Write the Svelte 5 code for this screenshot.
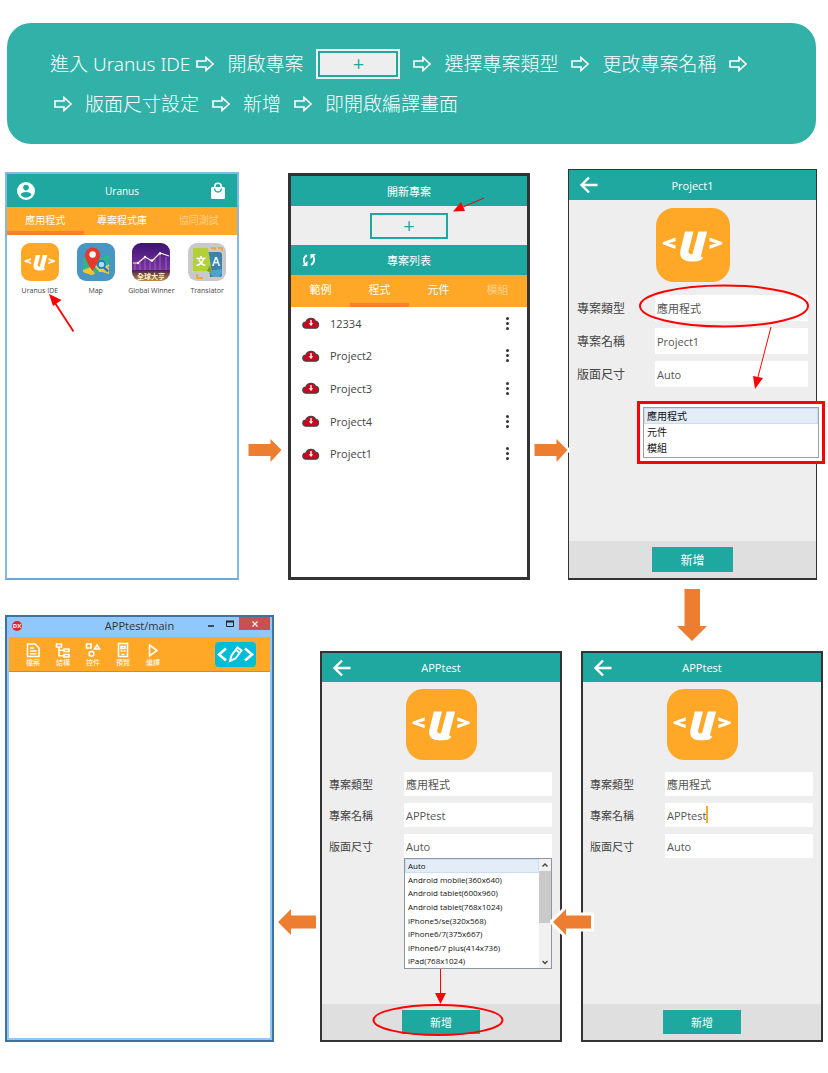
<script>
  const appTabs = ['應用程式', '專案程式庫', '協同測試'];
  const apps = ['Uranus IDE', 'Map', 'Global Winner', 'Translator'];
  const projectTabs = ['範例', '程式', '元件', '模組'];
  const projects = ['12334', 'Project2', 'Project3', 'Project4', 'Project1'];
  const types = ['應用程式', '元件', '模組'];
  const sizes = [
    'Auto',
    'Android mobile(360x640)',
    'Android tablet(600x960)',
    'Android tablet(768x1024)',
    'iPhone5/se(320x568)',
    'iPhone6/7(375x667)',
    'iPhone6/7 plus(414x736)',
    'iPad(768x1024)'
  ];
  const tools = ['檔案', '結構', '控件', '預覽', '編譯'];
</script>

{#snippet step()}
  <svg class="step" viewBox="0 0 18 16" width="18" height="16" aria-hidden="true">
    <path d="M1 5H10V1.5L17 8L10 14.5V11H1Z" fill="none" stroke="#fff" stroke-width="1.6" />
  </svg>
{/snippet}

{#snippet nextArrow()}
  <svg viewBox="0 0 38 32" width="38" height="32" aria-hidden="true">
    <path d="M2.5 10H24.5V5L35.5 16L24.5 28V22H2.5Z" fill="#ed7d31" stroke="#fff" stroke-width="5" paint-order="stroke" />
  </svg>
{/snippet}

{#snippet backArrow()}
  <svg viewBox="0 0 44 34" width="44" height="34" aria-hidden="true">
    <path d="M41 10.500H16V4L3 17L16 30V23.500H41Z" fill="#ed7d31" stroke="#fff" stroke-width="6" paint-order="stroke" />
  </svg>
{/snippet}

{#snippet logo()}
  <svg class="logo" viewBox="0 0 74 74" aria-hidden="true">
    <rect width="74" height="74" rx="18" fill="#ffa726" />
    <path d="M29 23.500H37.500L32.500 43Q32 47 36.500 46L42.500 23.500H51.200L45 47.500Q44.800 49.500 47.200 49.500Q45.500 53.500 38 53.500H34Q23 53 24.300 43Z" fill="#fff" />
    <path d="M19.500 29.500V33.200L12.500 35.200L19.500 37.200V41L6.800 36.300V34.200Z" fill="#fff" />
    <path d="M53.500 29.500V33.200L60.500 35.200L53.500 37.200V41L66.300 36.300V34.200Z" fill="#fff" />
  </svg>
{/snippet}

{#snippet form(id, name)}
  <header class="bar">
    <button class="back" aria-label="返回">
      <svg viewBox="0 0 20 20" width="20" height="20"><path d="M18.500 10H3M10 2.500L2.500 10L10 17.500" fill="none" stroke="#fff" stroke-width="2.400" /></svg>
    </button>
    <h2>{name}</h2>
  </header>
  {@render logo()}
  <div class="fields">
    <label for="{id}-type">專案類型</label>
    <select id="{id}-type">
      {#each types as t}<option>{t}</option>{/each}
    </select>
    <label for="{id}-name">專案名稱</label>
    <div class="name">
      <input id="{id}-name" value={name} />
      {#if id === 'named'}<span class="caret"></span>{/if}
    </div>
    <label for="{id}-size">版面尺寸</label>
    <select id="{id}-size">
      {#each sizes as s}<option>{s}</option>{/each}
    </select>
  </div>
  <footer><button>新增</button></footer>
{/snippet}

<main>
  <section class="banner">
    <div class="line">
      <span class="first">進入 Uranus IDE {@render step()}</span>
      <span>開啟專案</span>
      <button class="plus" aria-label="開新專案"><span>+</span></button>
      {@render step()}
      <span>選擇專案類型</span>
      {@render step()}
      <span>更改專案名稱</span>
      {@render step()}
    </div>
    <div class="line second">
      {@render step()}
      <span>版面尺寸設定</span>
      {@render step()}
      <span>新增</span>
      {@render step()}
      <span>即開啟編譯畫面</span>
    </div>
  </section>

  <div class="row top">
    <section class="screen home">
      <header class="bar">
        <button class="left" aria-label="帳號">
          <svg viewBox="0 0 18 18" width="18" height="18">
            <circle cx="9" cy="9" r="9" fill="#fff" />
            <circle cx="9" cy="5.600" r="2.800" fill="#1ba8a0" />
            <path d="M3.500 12.500Q4.500 10 9 10T14.500 12.500Q12.500 15.600 9 15.600T3.500 12.500Z" fill="#1ba8a0" />
          </svg>
        </button>
        <h2>Uranus</h2>
        <button class="right" aria-label="商店">
          <svg viewBox="0 0 16 18" width="16" height="18">
            <path d="M4.800 6V4.500A3.200 3.200 0 0 1 11.200 4.500V6" fill="none" stroke="#fff" stroke-width="1.600" />
            <rect x="1" y="5" width="14" height="12" rx="1.500" fill="#fff" />
            <path d="M4.500 6.500Q5 10 8 10T11.500 6.500" fill="none" stroke="#1ba8a0" stroke-width="1.400" />
          </svg>
        </button>
      </header>
      <nav>
        {#each appTabs as t, i}<button class:on={i === 0} class:dim={i === 2}>{t}</button>{/each}
      </nav>
      <div class="apps">
        {#each apps as a, i}
          <button>
            {#if i === 0}
              {@render logo()}
            {:else if i === 1}
              <svg viewBox="0 0 38 38">
                <rect width="38" height="38" rx="9" fill="#4796c4" />
                <path d="M6 15L14 12L23 15L32 12V31L23 28L14 32L6 29Z" fill="#2fb58d" />
                <path d="M6 27L14 24L18 31L14 32L6 29ZM22 28L25 21L32 25V31Z" fill="#ffc531" />
                <path d="M14 12L16 20L23 28L32 22" fill="none" stroke="#f2d54c" stroke-width="1.800" />
                <path d="M15.500 28Q8 17 8 12A7.600 7.600 0 0 1 23.200 12Q23 17 15.500 28Z" fill="#e8382c" />
                <circle cx="15.600" cy="11.500" r="3.200" fill="#fff" />
                <circle cx="24.500" cy="21.500" r="3.600" fill="#a8e0fa" stroke="#1b76d1" stroke-width="1.600" />
                <path d="M27 24.500L31 28.500" stroke="#1b76d1" stroke-width="2.400" />
              </svg>
            {:else if i === 2}
              <svg viewBox="0 0 38 38">
                <defs>
                  <linearGradient id="night" x1="0" y1="0" x2="0" y2="1">
                    <stop offset="0" stop-color="#3b1370" />
                    <stop offset="0.700" stop-color="#7b35a0" />
                    <stop offset="0.710" stop-color="#44204d" />
                    <stop offset="1" stop-color="#bd8b45" />
                  </linearGradient>
                </defs>
                <rect width="38" height="38" rx="9" fill="url(#night)" />
                <path d="M3 20V27M8 17V27M13 15V27M18 18V27M23 16V27M28 11V27M34 14V27" stroke="#a76cc8" stroke-width="0.800" />
                <path d="M1 20L6 20L13 14L20 18L28 10L37 13" fill="none" stroke="#fff0d8" stroke-width="1.200" />
                <g fill="#fff"><circle cx="6" cy="20" r="1.200" /><circle cx="13" cy="14" r="1.200" /><circle cx="20" cy="17.500" r="1.200" /><circle cx="28" cy="10.500" r="1.200" /></g>
                <text x="19" y="35.500" text-anchor="middle" font-size="7" font-weight="700" fill="#fff0c8">全球大亨</text>
              </svg>
            {:else}
              <svg viewBox="0 0 38 38">
                <rect width="38" height="38" rx="9" fill="#c9c9cb" />
                <path d="M20 9H31Q34 9 34 12V32Q34 34 31 34H22Z" fill="#3b83ad" />
                <path d="M21 28L25 34H31L34 30V26Z" fill="#4fa3cf" />
                <path d="M5 5H20L24 30L19 28H5Z" fill="#b3cf39" />
                <path d="M19 28L24 30L22 22Z" fill="#7d9828" />
                <path d="M23 5H27V7M34 8V5H30M9 31V35H15" fill="none" stroke="#f59a23" stroke-width="1.500" />
                <text x="13" y="22" text-anchor="middle" font-size="10" font-weight="700" fill="#fff">文</text>
                <text x="28" y="23" text-anchor="middle" font-size="12" font-weight="600" fill="#fff">A</text>
              </svg>
            {/if}
            <span>{a}</span>
          </button>
        {/each}
      </div>
      <svg class="mark home-mark" viewBox="0 0 26 40" width="26" height="40" aria-hidden="true">
        <path d="M24.500 38.500L6 10" stroke="#f00" stroke-width="1.800" /><path d="M0 1L12.500 7L4 13Z" fill="#f00" />
      </svg>
    </section>

    <div class="arrow">{@render nextArrow()}</div>

    <section class="screen list">
      <header class="bar"><h2>開新專案</h2></header>
      <div class="create"><button aria-label="開新專案">+</button></div>
      <header class="bar">
        <button class="left" aria-label="重新整理">
          <svg viewBox="0 0 16 14" width="16" height="14">
            <path d="M6 2Q1 5.500 4 11.500M10 12Q15 8.500 12 2.500" fill="none" stroke="#fff" stroke-width="1.800" />
            <path d="M1 13H6.500V8ZM15 1H9.500V6Z" fill="#fff" />
          </svg>
        </button>
        <h2>專案列表</h2>
      </header>
      <nav>
        {#each projectTabs as t, i}<button class:on={i === 1} class:dim={i === 3}>{t}</button>{/each}
      </nav>
      <ul class="projects">
        {#each projects as p}
          <li>
            <svg viewBox="0 0 18 14" width="18" height="14" aria-hidden="true">
              <path d="M4 12.200A3.100 3.100 0 0 1 3.800 6A5.300 5.300 0 0 1 13.600 5.200A3.600 3.600 0 0 1 14 12.200Z" fill="#d0021b" stroke="#444" stroke-width="1.200" />
              <path d="M9 4V8.500" stroke="#fff" stroke-width="1.400" /><path d="M6.800 7.300H11.200L9 10Z" fill="#fff" />
            </svg>
            <span>{p}</span>
            <button aria-label="{p} 選單"><i></i><i></i><i></i></button>
          </li>
        {/each}
      </ul>
      <svg class="mark list-mark" viewBox="0 0 32 16" width="32" height="16" aria-hidden="true">
        <path d="M31 1L10 10" stroke="#e00" stroke-width="1" /><path d="M0 14.500L8 5L12 14Z" fill="#f00" />
      </svg>
    </section>

    <div class="arrow">{@render nextArrow()}</div>

    <section class="screen form large">
      {@render form('create', 'Project1')}
      <svg class="mark type-mark" viewBox="0 0 172 108" width="172" height="108" aria-hidden="true">
        <ellipse cx="86" cy="23" rx="84" ry="20.500" fill="none" stroke="#f00" stroke-width="2" />
        <path d="M133 44L120 94" stroke="#f00" stroke-width="1" /><path d="M117 106L115 93L125 95Z" fill="#f00" />
      </svg>
      <div class="type-box">
        <ul role="listbox" aria-label="專案類型">
          {#each types as t, i}<li role="option" aria-selected={i === 0}>{t}</li>{/each}
        </ul>
      </div>
    </section>
  </div>

  <div class="row bottom">
    <section class="screen desktop">
      <div class="title">
        <svg viewBox="0 0 12 12" width="12" height="12" aria-hidden="true">
          <circle cx="6" cy="6" r="5" fill="#e3242b" /><text x="6" y="8" font-size="6" font-weight="700" text-anchor="middle" fill="#fff">DX</text>
        </svg>
        <h2>APPtest/main</h2>
        <div class="controls">
          <button aria-label="最小化"><svg viewBox="0 0 8 8" width="8" height="8"><path d="M1 6H7" stroke="#222" stroke-width="1.500" /></svg></button>
          <button aria-label="最大化"><svg viewBox="0 0 8 8" width="8" height="8"><path d="M0.500 1.500H7.500V6.500H0.500Z" fill="none" stroke="#222" stroke-width="1" /><path d="M0 1.500H8" stroke="#222" stroke-width="2" /></svg></button>
          <button class="close" aria-label="關閉"><svg viewBox="0 0 8 8" width="8" height="8"><path d="M1.500 1.500L6.500 6.500M6.500 1.500L1.500 6.500" stroke="#fff" stroke-width="1.200" /></svg></button>
        </div>
      </div>
      <div class="toolbar">
        {#each tools as t, i}
          <button>
            <svg viewBox="0 0 16 16" width="16" height="16" fill="none" stroke="#fff" stroke-width="1.600">
              {#if i === 0}
                <path d="M2.500 2H10L14 6V14.500H2.500ZM5 6H9M5 9H11.500M5 11.800H11.500" />
              {:else if i === 1}
                <path d="M1.500 2H6.500V5H1.500ZM9 7H14V9.500H9ZM9 12.500H14V15H9ZM4 5V13.700H9M4 8.200H9" />
              {:else if i === 2}
                <path d="M1.500 2H6V6H1.500ZM12 3L14.500 7H9.500Z" /><circle cx="6.500" cy="11.800" r="2.400" />
              {:else if i === 3}
                <path d="M3.500 1.500H12.500V14.500H3.500Z" /><path d="M6 4.500H10V6.500H6ZM5.500 9H7.500M8.500 9H10.500M6.500 12.500H9.500" />
              {:else}
                <path d="M4.500 3L12 8.500L4.500 14Z" />
              {/if}
            </svg>
            <span>{t}</span>
          </button>
        {/each}
        <button class="code" aria-label="編輯程式碼">
          <svg viewBox="0 0 41 25" width="41" height="25" fill="none" stroke="#fff" stroke-width="2.600">
            <path d="M11 6.500L4 12.500L11 18.500M30 6.500L37 12.500L30 18.500" />
            <path d="M15 19L16.500 13.500L22.500 5.500L26.500 8.500L20.500 16.500ZM21 8L24.500 10.800" stroke-width="2" />
          </svg>
        </button>
      </div>
      <div class="canvas"></div>
    </section>

    <div class="arrow back-arrow">{@render backArrow()}</div>

    <section class="screen form">
      {@render form('sized', 'APPtest')}
      <div class="size-box">
        <ul role="listbox" aria-label="版面尺寸">
          {#each sizes as s, i}<li role="option" aria-selected={i === 0}>{s}</li>{/each}
        </ul>
        <div class="scroll" aria-hidden="true">
          <svg viewBox="0 0 12 12" width="12" height="12"><path d="M3.500 7.500L6 5L8.500 7.500" fill="none" stroke="#444" stroke-width="1.400" /></svg>
          <span></span>
          <svg viewBox="0 0 12 12" width="12" height="12"><path d="M3.500 5L6 7.500L8.500 5" fill="none" stroke="#444" stroke-width="1.400" /></svg>
        </div>
      </div>
      <svg class="mark add-mark" viewBox="0 0 132 68" width="132" height="68" aria-hidden="true">
        <ellipse cx="66" cy="51" rx="64.500" ry="15" fill="none" stroke="#f00" stroke-width="2" />
        <path d="M68.500 0V26" stroke="#f00" stroke-width="1" /><path d="M63 24H74L68.500 35Z" fill="#f00" />
      </svg>
    </section>

    <div class="arrow back-arrow">{@render backArrow()}</div>

    <div class="stack">
      <svg viewBox="0 0 30 52" width="30" height="52" aria-hidden="true"><path d="M7.500 0H23V37H30L15 52L0 37H7.500Z" fill="#ed7d31" /></svg>
      <section class="screen form">{@render form('named', 'APPtest')}</section>
    </div>
  </div>
</main>

<style>
  :global(body) { margin: 0; background: #fff; }
  main, button, input, select {
    font-family: 'Open Sans', 'Noto Sans CJK TC', sans-serif;
  }
  main { --teal: #1fa8a0; --orange: #ffa726; padding: 23px 5px 31px; color: #444; font-size: 11px; }
  main *, main *::before { box-sizing: border-box; }
  button { padding: 0; border: 0; background: none; color: inherit; font-size: inherit; }
  h2, ul { margin: 0; padding: 0; font-size: inherit; font-weight: 400; list-style: none; }
  svg { display: block; flex: none; }

  .banner { margin: 0 7px 0 2px; padding: 21px 43px 20px; border-radius: 24px; background: #32b1a9; color: #fff; font-family: 'Noto Sans', 'Noto Sans CJK TC', sans-serif; font-size: 19px; font-weight: 300; line-height: 40px; }
  .line { display: flex; align-items: center; gap: 13px; height: 40px; white-space: nowrap; }
  .second { padding-left: 4px; }
  .first { display: flex; align-items: center; gap: 6px; }
  .plus { width: 84px; height: 30px; padding: 2px; background: #eee; }
  .plus span { display: block; border: 2px solid var(--teal); color: var(--teal); font-size: 20px; line-height: 22px; }

  .row { display: grid; align-items: end; }
  .top { grid-template-columns: 234fr 49fr 242fr 38fr 249fr; margin: 25px 6px 0 0; }
  .bottom { grid-template-columns: 269fr 46fr 242fr 19fr 242fr; margin-top: 9px; }
  .arrow { position: relative; z-index: 2; display: flex; justify-content: center; min-width: 0; padding: 0 0 114px 3px; }
  .back-arrow { padding: 0 0 103px; }
  .back-arrow :global(svg) { margin: 0 -13px; }

  .screen { position: relative; display: flex; flex-direction: column; min-width: 0; }
  .bar { position: relative; display: flex; align-items: center; justify-content: center; height: 30px; background: var(--teal); color: #fff; }
  .bar .left, .bar .back { position: absolute; left: 10px; }
  .bar .right { position: absolute; right: 11px; }
  nav { display: flex; background: var(--orange); color: #fff; }
  nav button { flex: 1; border-bottom: 4px solid transparent; }
  nav .on { border-color: #ff7f27; }
  nav .dim { color: #ffd08a; }

  .home { min-height: 408px; border: 2px solid #83b9e6; border-bottom-color: #6ea8d8; font-size: 10px; }
  .home .bar { height: 33px; }
  .home nav { height: 28px; }
  .apps { display: grid; grid-template-columns: repeat(4, 1fr); padding: 8px 2px 0 5px; }
  .apps button { display: flex; flex-direction: column; align-items: center; min-width: 0; font-size: 7px; line-height: 19px; white-space: nowrap; }
  .apps svg, .apps :global(.logo) { width: 38px; height: 38px; margin: 0; }
  .mark { position: absolute; z-index: 3; pointer-events: none; }
  .home-mark { left: 42px; top: 119px; }

  .list { min-height: 407px; border: 3px solid #333; }
  .create { display: flex; align-items: center; justify-content: center; height: 39px; background: #eee; }
  .create button { width: 78px; height: 26px; border: 2px solid var(--teal); color: var(--teal); font-size: 20px; line-height: 20px; }
  .list nav { height: 32px; }
  .projects { display: grid; grid-auto-rows: 1fr; height: 163px; }
  .projects li { display: flex; align-items: center; gap: 10px; padding: 0 18px 0 11px; }
  .projects button { display: flex; flex-direction: column; gap: 2px; margin-left: auto; }
  .projects i { width: 3px; height: 3px; border-radius: 50%; background: #333; }
  .list-mark { left: 162px; top: 21px; }

  .form { --label: 75px; --field: 24px; --gap: 7px; min-height: 391px; border: 2px solid #333; background: #eee; }
  .form .bar { height: 29px; }
  .form .logo { width: 71px; height: 71px; margin: 7px auto 12px; }
  .fields { display: grid; grid-template-columns: var(--label) 1fr; grid-auto-rows: var(--field); row-gap: var(--gap); align-items: center; padding: 0 8px 0 7px; white-space: nowrap; }
  .fields select, .fields input { display: block; width: 100%; height: var(--field); margin: 0; padding: 0 2px; border: 0; border-radius: 0; background: #fff; color: #555; font-size: 11px; appearance: none; outline: 0; }
  .name { position: relative; }
  .caret { position: absolute; left: 41px; top: 3px; width: 2px; height: 17px; background: var(--orange); }
  footer { display: flex; align-items: center; justify-content: center; height: 36px; margin-top: auto; background: #dfdfdf; }
  footer button { width: 78px; height: 24px; background: var(--teal); color: #fff; }
  .large { --label: 78px; --field: 26px; min-height: 411px; border-width: 1px 1px 2px; font-size: 12px; }
  .large .bar { height: 30px; font-size: 11px; }
  .large .fields { padding: 0 8px; }
  .large .logo { width: 74px; height: 74px; margin: 8px auto 13px; }
  .large footer { height: 37px; }
  .large footer button { width: 81px; height: 25px; }
  .type-mark { right: 6px; top: 113px; }
  .type-box { position: absolute; right: -9px; top: 231px; z-index: 2; width: 188px; padding: 3px; border: 3px solid #f00; background: #fff; }
  .type-box ul { padding-bottom: 1px; border: 1px solid #9aa0ac; }
  .type-box li { height: 16px; padding-left: 3px; color: #111; font-size: 10px; line-height: 16px; }
  li[aria-selected='true'] { background: #e3ecf7; box-shadow: inset 0 0 0 1px #c9def5; }

  .size-box { position: absolute; left: 82px; right: 8px; top: 205px; z-index: 1; display: flex; border: 1px solid #8d95a3; background: #fff; color: #111; }
  .size-box ul { display: grid; flex: 1; grid-auto-rows: 1fr; min-width: 0; height: 109px; }
  .size-box li { padding-left: 3px; font-size: 8px; line-height: 13px; white-space: nowrap; }
  .scroll { display: flex; flex-direction: column; width: 12px; background: #f1f1f1; }
  .scroll span { height: 52px; margin-bottom: auto; background: #c9c9c9; }
  .add-mark { left: 50px; bottom: 3px; }
  .stack { display: flex; flex-direction: column; gap: 10px; min-width: 0; }
  .stack > svg { align-self: center; margin-right: 20px; }

  .desktop { min-height: 427px; padding: 0 2px 2px; border: 2px solid #3f719f; background: #90c8fb; }
  .title { position: relative; display: flex; align-items: center; justify-content: center; height: 20px; padding-bottom: 3px; color: #333; }
  .title > svg { position: absolute; left: 2px; }
  .controls { position: absolute; top: 0; right: 0; display: flex; }
  .controls button { display: flex; align-items: center; justify-content: center; width: 19px; height: 13px; }
  .controls .close { width: 31px; background: #c75050; }
  .toolbar { display: flex; align-items: center; height: 35px; padding: 0 14px 0 9px; border-bottom: 1px solid #d98a1c; background: var(--orange); color: #fff; }
  .toolbar button { display: flex; flex-direction: column; align-items: center; width: 30px; font-size: 7px; line-height: 9px; }
  .toolbar .code { width: 41px; margin-left: auto; border-radius: 4px; background: #00bcd4; }
  .canvas { flex: 1; background: #fff; }
</style>
